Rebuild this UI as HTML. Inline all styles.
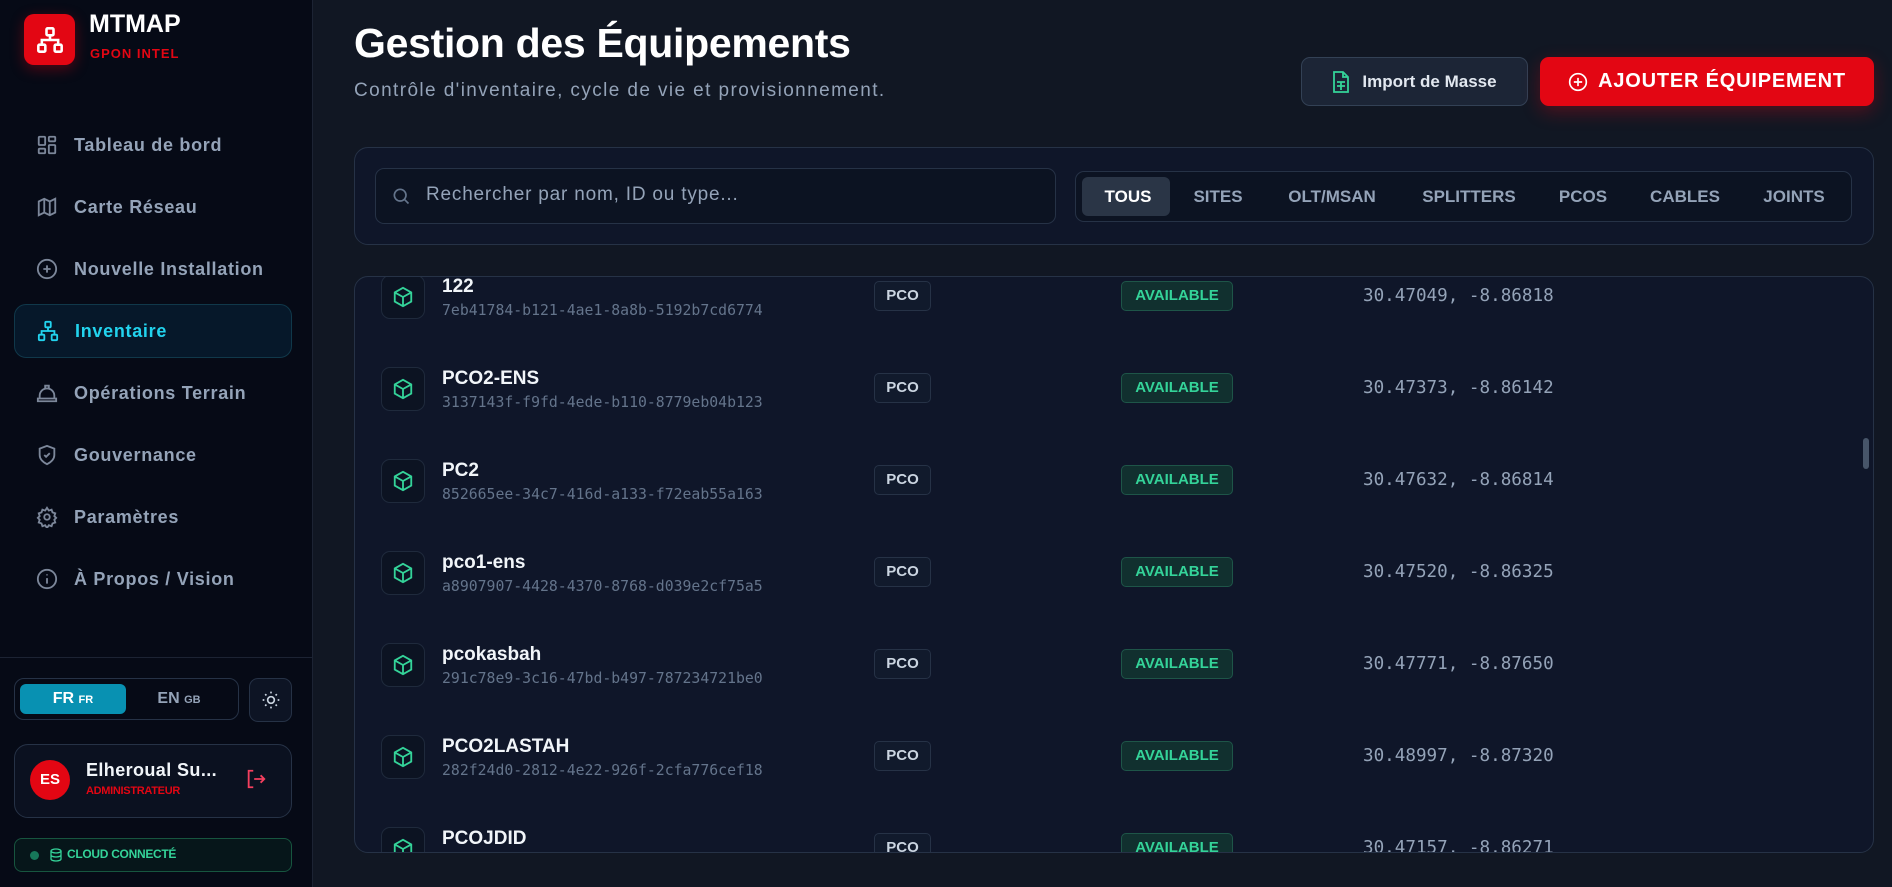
<!DOCTYPE html>
<html><head><meta charset="utf-8"><style>
*{box-sizing:border-box;margin:0;padding:0}
body{width:1892px;height:887px;overflow:hidden;background:#111723;font-family:"Liberation Sans","DejaVu Sans",sans-serif;position:relative}
.sb{position:absolute;left:0;top:0;width:313px;height:887px;background:#060a16;border-right:1px solid #1c2333}
.abs{position:absolute}
.logo{left:24px;top:14px;width:51px;height:51px;background:#e30613;border-radius:10px;box-shadow:0 4px 14px rgba(227,6,19,.35);display:flex;align-items:center;justify-content:center}
.nav{position:absolute;left:14px;width:278px;height:54px;display:flex;align-items:center;padding-left:22px;color:#94a3b8;font-weight:bold;font-size:18px;letter-spacing:.7px}
.nav svg{margin-right:16px}
.nav.act{background:#06182a;border:1px solid #10384a;border-radius:12px;color:#22d3ee}
.main-title{left:354px;top:20px;font-size:41px;font-weight:bold;color:#fff;letter-spacing:-.3px}
.sub{left:354px;top:80px;font-size:19px;color:#94a3b8;letter-spacing:1.4px}
.card{background:#0f1629;border:1px solid #263246;border-radius:14px}
.tab{position:absolute;top:0;height:50px;line-height:50px;font-size:17px;font-weight:bold;color:#94a3b8;transform:translateX(-50%)}
.ib{position:absolute;left:26px;width:44px;height:44px;border:1px solid #1f2a3c;border-radius:9px;background:#0c1322;display:flex;align-items:center;justify-content:center}
.nm{position:absolute;left:87px;font-size:19px;font-weight:bold;color:#f1f5f9}
.id{position:absolute;left:87px;font-family:"DejaVu Sans Mono","Liberation Mono",monospace;font-size:14.8px;color:#64748b}
.pco{position:absolute;left:519px;width:57px;height:30px;border:1px solid #263246;border-radius:5px;background:#111a2c;color:#cbd5e1;font-weight:bold;font-size:15px;text-align:center;line-height:28px}
.av{position:absolute;left:766px;width:112px;height:30px;border:1px solid #1e5548;border-radius:5px;background:#11302f;color:#34d399;font-weight:bold;font-size:15px;text-align:center;line-height:28px}
.co{position:absolute;left:1008px;font-family:"DejaVu Sans Mono","Liberation Mono",monospace;font-size:17.6px;color:#94a3b8}
</style></head><body>
<div class="sb">
  <div class="abs logo"><svg width="28" height="28" viewBox="0 0 24 24" fill="none" stroke="#fff" stroke-width="2.2"><rect x="9" y="2" width="6" height="6" rx="1"/><rect x="2" y="16" width="6" height="6" rx="1"/><rect x="16" y="16" width="6" height="6" rx="1"/><path d="M12 8v4M5 16v-4h14v4"/></svg></div>
  <div class="abs" style="left:89px;top:10px;font-size:25px;font-weight:bold;color:#fff">MTMAP</div>
  <div class="abs" style="left:90px;top:46px;font-size:13px;font-weight:bold;color:#e30613;letter-spacing:1px">GPON INTEL</div>

  <div class="nav" style="top:118px"><svg width="22" height="22" viewBox="0 0 24 24" fill="none" stroke="#7c879a" stroke-width="2"><rect x="3" y="3" width="7" height="9" rx="1"/><rect x="14" y="3" width="7" height="5" rx="1"/><rect x="14" y="12" width="7" height="9" rx="1"/><rect x="3" y="16" width="7" height="5" rx="1"/></svg>Tableau de bord</div>
  <div class="nav" style="top:180px"><svg width="22" height="22" viewBox="0 0 24 24" fill="none" stroke="#7c879a" stroke-width="2"><path d="M3 6l6-3 6 3 6-3v15l-6 3-6-3-6 3z M9 3v15 M15 6v15"/></svg>Carte Réseau</div>
  <div class="nav" style="top:242px"><svg width="22" height="22" viewBox="0 0 24 24" fill="none" stroke="#7c879a" stroke-width="2"><circle cx="12" cy="12" r="10"/><path d="M12 8v8M8 12h8"/></svg>Nouvelle Installation</div>
  <div class="nav act" style="top:304px"><svg width="22" height="22" viewBox="0 0 24 24" fill="none" stroke="#22d3ee" stroke-width="2"><rect x="9" y="2" width="6" height="6" rx="1"/><rect x="2" y="16" width="6" height="6" rx="1"/><rect x="16" y="16" width="6" height="6" rx="1"/><path d="M12 8v4M5 16v-4h14v4"/></svg>Inventaire</div>
  <div class="nav" style="top:366px"><svg width="22" height="22" viewBox="0 0 24 24" fill="none" stroke="#7c879a" stroke-width="2"><path d="M2 18h20v3H2zM4 18v-3a8 8 0 0116 0v3M10 7V4h4v3"/></svg>Opérations Terrain</div>
  <div class="nav" style="top:428px"><svg width="22" height="22" viewBox="0 0 24 24" fill="none" stroke="#7c879a" stroke-width="2"><path d="M12 2l8 3v7c0 5-4 8-8 10-4-2-8-5-8-10V5z M9 12l2 2 4-4"/></svg>Gouvernance</div>
  <div class="nav" style="top:490px"><svg width="22" height="22" viewBox="0 0 24 24" fill="none" stroke="#7c879a" stroke-width="2"><circle cx="12" cy="12" r="3"/><path d="M12 2l2 3 3-1 1 3 3 1-1 3 2 2-2 2 1 3-3 1-1 3-3-1-2 3-2-3-3 1-1-3-3-1 1-3-2-2 2-2-1-3 3-1 1-3 3 1z"/></svg>Paramètres</div>
  <div class="nav" style="top:552px"><svg width="22" height="22" viewBox="0 0 24 24" fill="none" stroke="#7c879a" stroke-width="2"><circle cx="12" cy="12" r="10"/><path d="M12 11v6M12 7v1"/></svg>À Propos / Vision</div>

  <div class="abs" style="left:0;top:657px;width:313px;height:1px;background:#1c2333"></div>
  <div class="abs" style="left:14px;top:678px;width:225px;height:42px;border:1px solid #263246;border-radius:10px"></div>
  <div class="abs" style="left:20px;top:684px;width:106px;height:30px;background:#0891b2;border-radius:6px;color:#fff;font-weight:bold;font-size:16px;text-align:center;line-height:30px">FR <span style="font-size:11px">FR</span></div>
  <div class="abs" style="left:126px;top:684px;width:106px;height:30px;color:#94a3b8;font-weight:bold;font-size:16px;text-align:center;line-height:30px">EN <span style="font-size:11px">GB</span></div>
  <div class="abs" style="left:249px;top:678px;width:43px;height:44px;border:1px solid #263246;border-radius:9px;background:#0d1424;display:flex;align-items:center;justify-content:center"><svg width="20" height="20" viewBox="0 0 24 24" fill="none" stroke="#cbd5e1" stroke-width="2"><circle cx="12" cy="12" r="4"/><path d="M12 2v2M12 20v2M2 12h2M20 12h2M5 5l1.5 1.5M17.5 17.5L19 19M5 19l1.5-1.5M17.5 6.5L19 5"/></svg></div>
  <div class="abs card" style="left:14px;top:744px;width:278px;height:74px;background:#0b1120"></div>
  <div class="abs" style="left:30px;top:760px;width:40px;height:40px;border-radius:50%;background:#e30613;color:#fff;font-weight:bold;font-size:15px;text-align:center;line-height:40px">ES</div>
  <div class="abs" style="left:86px;top:760px;font-size:18px;font-weight:bold;color:#f1f5f9;letter-spacing:.4px">Elheroual Su...</div>
  <div class="abs" style="left:86px;top:785px;font-size:11px;font-weight:bold;color:#e30613;letter-spacing:-.3px">ADMINISTRATEUR</div>
  <div class="abs" style="left:245px;top:768px"><svg width="22" height="22" viewBox="0 0 24 24" fill="none" stroke="#f43f5e" stroke-width="2"><path d="M9 3H4v18h5M10 12h11M17 8l4 4-4 4"/></svg></div>
  <div class="abs" style="left:14px;top:838px;width:278px;height:34px;border:1px solid #17553f;border-radius:8px;background:#06161a"></div>
  <div class="abs" style="left:30px;top:851px;width:9px;height:9px;border-radius:50%;background:#17785a"></div>
  <div class="abs" style="left:50px;top:848px"><svg width="12" height="14" viewBox="0 0 12 14" fill="none" stroke="#34d399" stroke-width="1.3"><ellipse cx="6" cy="3" rx="5" ry="2"/><path d="M1 3v8c0 1 2 2 5 2s5-1 5-2V3M1 7c0 1 2 2 5 2s5-1 5-2"/></svg></div>
  <div class="abs" style="left:67px;top:847px;font-size:12px;font-weight:bold;color:#34d399;letter-spacing:-.3px">CLOUD CONNECTÉ</div>
</div>

<div class="abs main-title">Gestion des Équipements</div>
<div class="abs sub">Contrôle d'inventaire, cycle de vie et provisionnement.</div>
<div class="abs" style="left:1301px;top:57px;width:227px;height:49px;border:1px solid #334155;border-radius:9px;background:#1c2536;display:flex;align-items:center;justify-content:center;color:#e2e8f0;font-weight:bold;font-size:17px"><svg width="18" height="22" viewBox="0 0 18 22" fill="none" stroke="#34d399" stroke-width="1.8" style="margin-right:12px"><path d="M2 1h9l5 5v15H2z M11 1v5h5 M5 11h8M5 15h8M9 11v8"/></svg>Import de Masse</div>
<div class="abs" style="left:1540px;top:57px;width:334px;height:49px;border-radius:9px;background:#e30613;box-shadow:0 6px 18px rgba(227,6,19,.3);display:flex;align-items:center;justify-content:center;color:#fff;font-weight:bold;font-size:20px;letter-spacing:.8px"><svg width="20" height="20" viewBox="0 0 24 24" fill="none" stroke="#fff" stroke-width="2" style="margin-right:10px"><circle cx="12" cy="12" r="10"/><path d="M12 7v10M7 12h10"/></svg>AJOUTER ÉQUIPEMENT</div>

<div class="abs card" style="left:354px;top:147px;width:1520px;height:98px"></div>
<div class="abs" style="left:375px;top:168px;width:681px;height:56px;border:1px solid #263246;border-radius:9px;background:#0c1322"></div>
<div class="abs" style="left:391px;top:186px"><svg width="20" height="20" viewBox="0 0 24 24" fill="none" stroke="#64748b" stroke-width="2"><circle cx="11" cy="11" r="7"/><path d="M16 16l5 5"/></svg></div>
<div class="abs" style="left:426px;top:184px;font-size:19px;color:#94a3b8;letter-spacing:.8px">Rechercher par nom, ID ou type...</div>
<div class="abs" style="left:1075px;top:171px;width:777px;height:51px;border:1px solid #263246;border-radius:9px;background:#0c1322">
  <div class="abs" style="left:6px;top:5px;width:88px;height:39px;background:#2a3546;border-radius:6px"></div>
  <div class="tab" style="left:52px;color:#fff">TOUS</div>
  <div class="tab" style="left:142px">SITES</div>
  <div class="tab" style="left:256px">OLT/MSAN</div>
  <div class="tab" style="left:393px">SPLITTERS</div>
  <div class="tab" style="left:507px">PCOS</div>
  <div class="tab" style="left:609px">CABLES</div>
  <div class="tab" style="left:718px">JOINTS</div>
</div>

<div class="abs card" style="left:354px;top:276px;width:1520px;height:577px;overflow:hidden">
<div id="rows"></div>
<div class="abs" style="right:4px;top:161px;width:6px;height:31px;background:#475569;border-radius:3px"></div>
</div>
<script>
var d=[["122","7eb41784-b121-4ae1-8a8b-5192b7cd6774","30.47049, -8.86818"],["PCO2-ENS","3137143f-f9fd-4ede-b110-8779eb04b123","30.47373, -8.86142"],["PC2","852665ee-34c7-416d-a133-f72eab55a163","30.47632, -8.86814"],["pco1-ens","a8907907-4428-4370-8768-d039e2cf75a5","30.47520, -8.86325"],["pcokasbah","291c78e9-3c16-47bd-b497-787234721be0","30.47771, -8.87650"],["PCO2LASTAH","282f24d0-2812-4e22-926f-2cfa776cef18","30.48997, -8.87320"],["PCOJDID","","30.47157, -8.86271"]];
var h="",cube='<svg width="22" height="22" viewBox="0 0 24 24" fill="none" stroke="#34d399" stroke-width="2"><path d="M12 2l9 5v10l-9 5-9-5V7z M3 7l9 5 9-5 M12 12v10"/></svg>';
for(var i=0;i<d.length;i++){var c=30+i*92;
h+='<div class="ib" style="top:'+(c-32)+'px">'+cube+'</div><div class="nm" style="top:'+(c-31)+'px">'+d[i][0]+'</div><div class="id" style="top:'+(c-5)+'px">'+d[i][1]+'</div><div class="pco" style="top:'+(c-26)+'px">PCO</div><div class="av" style="top:'+(c-26)+'px">AVAILABLE</div><div class="co" style="top:'+(c-21)+'px">'+d[i][2]+'</div>';}
document.getElementById("rows").innerHTML=h;
</script>
</body></html>
